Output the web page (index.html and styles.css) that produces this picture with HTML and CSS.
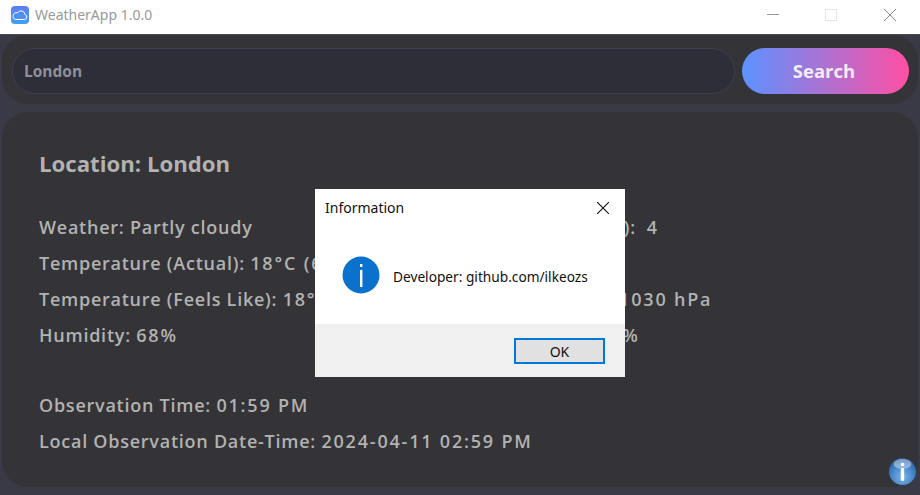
FILE: index.html
```html
<!DOCTYPE html>
<html lang="en">
<head>
    <meta charset="UTF-8">
    <title>WeatherApp 1.0.0</title>
    <link rel="stylesheet" href="styles.css">
</head>
<body>
    <header class="titlebar">
        <svg class="app-icon" width="18" height="18" viewBox="0 0 18 18">
            <defs>
                <linearGradient id="appGrad" x1="0" y1="0" x2="0" y2="1">
                    <stop offset="0" stop-color="#5f7df0"/>
                    <stop offset="1" stop-color="#3fa0f5"/>
                </linearGradient>
            </defs>
            <rect width="18" height="18" rx="4" fill="url(#appGrad)"/>
            <path d="M4.5 13.5h9a2.6 2.6 0 0 0 .4-5.1 3.9 3.9 0 0 0-7.3-1.5 3.3 3.3 0 0 0-2.1 6.6z" fill="none" stroke="#fff" stroke-width="1"/>
        </svg>
        <span class="app-title">WeatherApp 1.0.0</span>
        <div class="win-controls">
            <svg width="12" height="12" viewBox="0 0 12 12"><path d="M0 5.5h12" stroke="#9a9a9a" stroke-width="1"/></svg>
            <svg width="12" height="12" viewBox="0 0 12 12"><rect x=".5" y=".5" width="11" height="11" fill="none" stroke="#e4e4e4"/></svg>
            <svg class="win-close" width="12" height="12" viewBox="0 0 12 12"><path d="M0 0l12 12M12 0L0 12" stroke="#8a8a8a" stroke-width="1"/></svg>
        </div>
    </header>

    <main class="app">
        <section class="search-frame">
            <input class="search-input" type="text" value="London">
            <button class="search-btn">Search</button>
        </section>

        <section class="weather-card">
            <h2 class="location">Location: London</h2>
            <div class="info-grid">
                <p>Weather: Partly cloudy</p>
                <p>Wind Speed (km/h):&nbsp; <span class="val">4</span></p>
                <p>Temperature (Actual): <span class="val">18°C (64°F)</span></p>
                <p></p>
                <p>Temperature (Feels Like): <span class="val">18°C</span></p>
                <p>Station Pressure: <span class="val">1030 hPa</span></p>
                <p>Humidity: <span class="val">68%</span></p>
                <p>Cloud Coverage: <span class="val">5%</span></p>
            </div>
            <div class="times">
                <p>Observation Time: <span class="val">01:59 PM</span></p>
                <p>Local Observation Date-Time: <span class="val">2024-04-11 02:59 PM</span></p>
            </div>
        </section>
    </main>

    <svg class="about-icon" width="30" height="30" viewBox="0 0 30 30">
        <defs>
            <radialGradient id="aboutGrad" cx=".5" cy=".7" r=".7">
                <stop offset="0" stop-color="#7fb6e8"/>
                <stop offset=".65" stop-color="#3f7fc4"/>
                <stop offset="1" stop-color="#27558f"/>
            </radialGradient>
        </defs>
        <circle cx="14.5" cy="15.5" r="13.5" fill="url(#aboutGrad)"/>
        <ellipse cx="14.5" cy="8" rx="9" ry="5" fill="#fff" opacity=".4"/>
        <circle cx="14.5" cy="8.5" r="1.8" fill="#fff"/>
        <rect x="12.8" y="12" width="3.4" height="13" rx="1.4" fill="#fff"/>
    </svg>

    <div class="dialog">
        <div class="dialog-head">
            <span>Information</span>
            <svg width="12" height="12" viewBox="0 0 12 12"><path d="M0 0l12 12M12 0L0 12" stroke="#111" stroke-width="1.1"/></svg>
        </div>
        <div class="dialog-body">
            <svg width="38" height="38" viewBox="0 0 38 38">
                <circle cx="19" cy="19" r="18.5" fill="#0a72cc"/>
                <rect x="18" y="8" width="2.4" height="3" fill="#fff"/>
                <rect x="18" y="14" width="2.4" height="17" fill="#fff"/>
            </svg>
            <span class="dialog-msg">Developer: github.com/ilkeozs</span>
        </div>
        <div class="dialog-foot">
            <button class="ok-btn">OK</button>
        </div>
    </div>
</body>
</html>
```

FILE: styles.css
```css
* {
    box-sizing: border-box;
}

body {
    margin: 0;
    height: 495px;
    overflow: hidden;
    background-color: #3a3a46;
    font-family: "Open Sans", "Liberation Sans", sans-serif;
}

/* title bar */
.titlebar {
    height: 35px;
    background-color: #fff;
    border-bottom: 1px solid #4a4a55;
    display: flex;
    align-items: center;
    padding: 0 24px 5px 11px;
}

.app-title {
    margin-left: 6px;
    font-family: "Noto Sans", sans-serif;
    font-size: 14px;
    color: #999;
}

.win-controls {
    margin-left: auto;
    display: flex;
    gap: 46px;
}

.win-close {
    margin-left: 1px;
}

/* main window */
.app {
    display: flex;
    flex-direction: column;
    gap: 8px;
    padding: 0 2px;
}

.search-frame {
    height: 69px;
    background-color: #343338;
    border-radius: 26px;
    display: flex;
    align-items: center;
    gap: 7px;
    padding: 2px 9px 0 10px;
}

.search-input {
    flex: 1;
    height: 46px;
    background-color: #2e2e38;
    border: 1px solid #3f3f4b;
    border-radius: 23px;
    padding: 0 11px;
    font-family: inherit;
    font-size: 15.5px;
    font-weight: 700;
    color: #8f909a;
}

.search-btn {
    width: 167px;
    height: 46px;
    border: none;
    border-radius: 23px;
    padding: 0 3px 0 0;
    background: linear-gradient(to right, #5c92ff, #ff4fa3);
    font-family: inherit;
    font-size: 18.5px;
    font-weight: 700;
    color: #f4ecfa;
}

.weather-card {
    height: 375px;
    background-color: #343338;
    border-radius: 26px;
    padding: 37px 37px 0;
    color: #b2b2b0;
}

.location {
    margin: 0 0 40px;
    font-size: 22.2px;
    line-height: 30px;
    font-weight: 700;
}

.weather-card p {
    margin: 0;
    font-size: 18px;
    line-height: 16px;
    font-weight: 600;
    letter-spacing: .75px;
    white-space: nowrap;
}

.val {
    letter-spacing: 1.8px;
}

.info-grid {
    display: grid;
    grid-template-columns: 414px 1fr;
    grid-auto-rows: 16px;
    row-gap: 20px;
}

.times {
    margin-top: 54px;
    display: flex;
    flex-direction: column;
    gap: 20px;
}

/* about icon */
.about-icon {
    position: absolute;
    left: 888px;
    top: 456px;
}

/* message box */
.dialog {
    position: absolute;
    left: 315px;
    top: 189px;
    width: 310px;
    height: 188px;
    background-color: #fff;
    font-family: "Noto Sans", sans-serif;
    color: #111;
    display: flex;
    flex-direction: column;
}

.dialog-head {
    display: flex;
    justify-content: space-between;
    align-items: center;
    padding: 9px 16px 0 10px;
    font-size: 14px;
}

.dialog-body {
    flex: 1;
    display: flex;
    align-items: center;
    gap: 13px;
    padding: 8px 0 0 27px;
    font-size: 13.7px;
}

.dialog-msg {
    padding-top: 4px;
}

.dialog-foot {
    height: 53px;
    background-color: #f0f0f0;
    display: flex;
    justify-content: flex-end;
    padding: 14px 20px 0 0;
}

.ok-btn {
    width: 91px;
    height: 26px;
    background-color: #e1e1e1;
    border: 2px solid #0078d7;
    font-family: inherit;
    font-size: 14px;
    color: #111;
}
```
